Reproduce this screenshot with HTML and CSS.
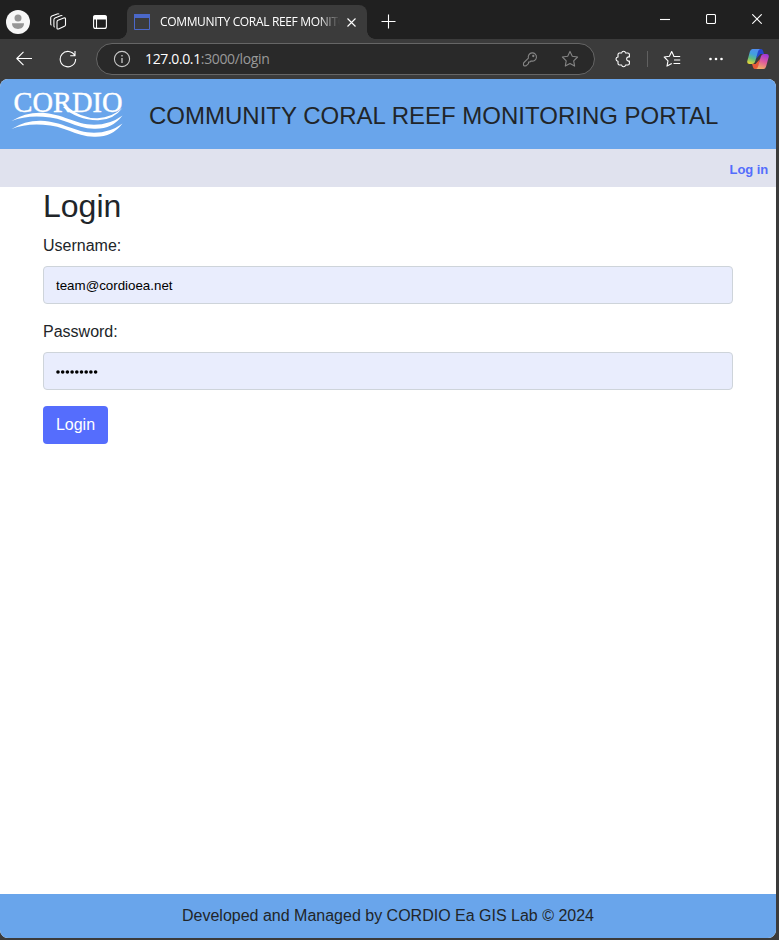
FILE: index.html
```html
<!DOCTYPE html>
<html lang="en">
<head>
<meta charset="utf-8">
<title>Community Coral Reef Monitoring Portal</title>
<link rel="stylesheet" href="styles.css">
</head>
<body>
<div class="window">
  <div class="titlebar">
    <span class="cell cell-avatar"><svg width="24" height="24" viewBox="0 0 24 24"><circle cx="12" cy="12" r="12" fill="#f7f7f7"/><circle cx="12" cy="8" r="3.500" fill="#969696"/><path d="M6 13.300h12c0 3.800-2.600 5.700-6 5.700s-6-1.900-6-5.700z" fill="#969696"/></svg></span>
    <span class="cell cell-spaces"><svg width="18" height="18" viewBox="0 0 18 18" class="line"><path d="M9 7.200 14.800 5Q16.500 4.500 16.500 6V11.700Q16.500 12.900 15.400 13.300L9.600 15.900Q8 16.500 8 14.900V8.700Q8 7.600 9 7.200ZM5.700 14.200Q4.900 13.900 4.900 13V6.700Q4.900 5.500 6 5L11.500 2.700Q12.600 2.300 13.400 2.900M2.500 12.200Q1.700 11.900 1.700 11V4.700Q1.700 3.500 2.800 3L8.200.9Q9.300.500 10.200 1.100"/></svg></span>
    <span class="cell cell-actions"><svg width="14" height="14" viewBox="0 0 14 14" class="line"><rect x=".6" y=".6" width="12.800" height="12.800" rx="2"/><path d="M1 1h12v3H1z" fill="#fff"/><path d="M3.500 4v9"/></svg></span>
    <div class="tab">
      <svg width="16" height="16" viewBox="0 0 16 16"><path d="M.5.500h15v15H.5z" fill="none" stroke="#4b68c9"/><path d="M0 0h16v4H0z" fill="#4b68c9"/></svg>
      <span class="tab-title">COMMUNITY CORAL REEF MONITORING PORTAL</span>
      <svg width="9" height="9" viewBox="0 0 9 9" class="line"><path d="m.5.500 8 8m0-8-8 8"/></svg>
    </div>
    <span class="cell cell-plus"><svg width="15" height="15" viewBox="0 0 15 15" class="line"><path d="M7.500.500v14M.500 7.500h14"/></svg></span>
    <div class="controls">
      <span class="cell control"><svg width="10" height="10" viewBox="0 0 10 10" class="line"><path d="M0 5.500h10"/></svg></span>
      <span class="cell control"><svg width="10" height="10" viewBox="0 0 10 10" class="line"><rect x=".5" y=".5" width="9" height="9" rx="1.200"/></svg></span>
      <span class="cell control"><svg width="10" height="10" viewBox="0 0 10 10" class="line"><path d="m.3.300 9.400 9.400m0-9.400L.3 9.700"/></svg></span>
    </div>
  </div>

  <div class="toolbar">
    <span class="cell cell-back"><svg width="16" height="16" viewBox="0 0 16 16" class="line"><path d="M16 7.500H.8M7.500.800.800 7.500l6.700 6.700"/></svg></span>
    <span class="cell cell-reload"><svg width="18" height="18" viewBox="0 0 18 18" class="line"><path d="M15.700 5.500A7.700 7.700 0 1 0 16.600 9M16 1v4.700h-4.800"/></svg></span>
    <div class="address">
      <svg width="18" height="18" viewBox="0 0 18 18" class="line info"><circle cx="9" cy="9" r="7.600"/><path d="M9 8v5M9 5v1.500" stroke-width="1.300"/></svg>
      <span class="url"><b>127.0.0.1</b>:3000/login</span>
      <svg width="18" height="18" viewBox="0 0 18 18" class="line dim key"><path d="M7.400 8.100a4.100 4.100 0 1 1 2.700 2.800L8.900 12H7.500v1.600l-1.700 1.600Q5.300 15.900 4.500 15.900H3.300Q2.500 15.900 2.500 15v-1.300Q2.500 13 3 12.500Z"/><circle cx="12.300" cy="6" r=".6"/></svg>
      <svg width="18" height="18" viewBox="0 0 18 18" class="line dim"><path d="m9 1.400 2.300 4.900 5.300.7-3.900 3.800.9 5.300L9 13.600l-4.700 2.500.9-5.300L1.400 7l5.300-.7z"/></svg>
    </div>
    <span class="cell cell-puzzle"><svg width="18" height="18" viewBox="0 0 18 18" class="line"><path d="M4.900 3H7.700Q7.900 1.300 9.600 1.300T11.500 3H13.700Q15.400 3 15.400 4.600V6.900H14.500Q12.600 7.100 12.600 9T14.500 11.100H15.400V13.400Q15.400 15 13.700 15H11.500Q11.300 16.700 9.600 16.700T7.700 15H5.600Q4 15 4 13.400V11.300Q2 11.100 2 9.100T4 7V4.600Q4 3 5.600 3"/></svg></span>
    <span class="divider"></span>
    <span class="cell cell-fav"><svg width="18" height="18" viewBox="0 0 18 18" class="line"><path d="M10.800 6.100 8.700 1.500 6.400 6.300 1.200 7l3.800 3.800-1 5.300 4.800-2.500M10.300 6.500h6.900M11 10h6.200M10.500 13.500h6.700"/></svg></span>
    <span class="cell cell-dots"><svg width="16" height="4" viewBox="0 0 16 4" fill="#fff"><circle cx="2.500" cy="2" r="1.300"/><circle cx="8" cy="2" r="1.300"/><circle cx="13.500" cy="2" r="1.300"/></svg></span>
    <span class="cell cell-copilot"><svg width="22" height="20" viewBox="0 0 22 20">
      <defs>
        <linearGradient id="cool" x1=".6" y1="0" x2=".3" y2="1"><stop offset="0" stop-color="#518ff0"/><stop offset=".35" stop-color="#429fe0"/><stop offset=".65" stop-color="#60bd80"/><stop offset="1" stop-color="#e5d735"/></linearGradient>
        <linearGradient id="warm" x1=".7" y1="0" x2=".4" y2="1"><stop offset="0" stop-color="#9c36df"/><stop offset=".5" stop-color="#df5a9d"/><stop offset="1" stop-color="#f2ad65"/></linearGradient>
      </defs>
      <path d="M11 0h3.200q1.300 0 1.800 1.800L17 5h-3.500L9 10z" fill="#2546ce"/>
      <path d="M11 20H7.800Q6.500 20 6 18.200L5 15h3.500L13 10z" fill="#e75a38"/>
      <path d="M5.500 0H13q-1.500.5-2 2.500L8.300 12q-.8 3-3.300 3H2.500Q-.3 15 .3 12L2.900 2.500Q3.700 0 5.500 0Z" fill="url(#cool)"/>
      <path d="M16.500 20H9q1.500-.5 2-2.500L13.700 8q.8-3 3.300-3h2.500q2.800 0 2.200 3l-2.600 9.500q-.8 2.500-2.600 2.500Z" fill="url(#warm)"/>
    </svg></span>
  </div>

  <div class="page">
    <header class="banner">
      <svg class="logo" width="118" height="52" viewBox="0 0 118 52" fill="#fff">
        <text class="logo-word" x="2.500" y="25" textLength="109" lengthAdjust="spacingAndGlyphs">CORDIO</text>
        <path d="M52 20h4.500q14 11.500 30 11.200Q101 30.500 111.500 21 102 33.500 86.500 33.200 66 33 52 20Z"/>
        <path d="M.5 34Q14 25.500 30 25.800c22 .8 34 11.800 53 12q16 0 28.500-9.300-10.500 14-28.500 13.300C64 41 53 30.500 32 29.700Q14 28.500.5 34Z"/>
        <path d="M.5 42Q14 33.500 30 33.800c22 .8 34 11.800 53 12q16 0 28.500-9.300-10.500 14-28.500 13.300C64 49 53 38.500 32 37.700Q14 36.500.5 42Z"/>
      </svg>
      <span class="portal-name">COMMUNITY CORAL REEF MONITORING PORTAL</span>
    </header>
    <nav class="nav"><a class="nav-link">Log in</a></nav>
    <main class="content">
      <h1 class="heading">Login</h1>
      <label class="label" for="username">Username:</label>
      <input class="field" id="username" type="text" value="team@cordioea.net">
      <label class="label" for="password">Password:</label>
      <div class="field masked" id="password"><svg width="42" height="4" viewBox="0 0 42 4"><path class="bullets" d="M2 2h38"/></svg></div>
      <button class="submit">Login</button>
    </main>
    <footer class="footer">Developed and Managed by CORDIO Ea GIS Lab © 2024</footer>
  </div>
</div>
</body>
</html>
```
FILE: styles.css
```css
* { box-sizing: border-box; }
body { margin: 0; background: #3b3b3b; font-family: "Liberation Sans", Arial, sans-serif; color: #212529; }
svg { display: block; flex: none; }
.line { fill: none; stroke: #fff; stroke-width: 1.1; stroke-linejoin: round; stroke-linecap: butt; }
.dim { stroke: #858585; }
.info { stroke: #c8c8c8; }
.window { width: 779px; height: 940px; overflow: hidden; display: flex; flex-direction: column; }
.cell { display: flex; align-items: center; justify-content: center; flex: none; }

.titlebar { height: 39px; flex: none; display: flex; background: #202020; }
.titlebar > .cell { height: 43px; }
.cell-avatar { width: 36px; }
.cell-spaces { width: 44px; }
.cell-actions { width: 40px; margin-right: 7px; }
.tab { position: relative; width: 240px; height: 34px; margin-top: 5px; padding: 0 11px 0 7px; display: flex; align-items: center; background: #3b3b3b; border-radius: 8px 8px 0 0; }
.tab::before, .tab::after { content: ""; position: absolute; bottom: 0; width: 8px; height: 8px; }
.tab::before { left: -8px; background: radial-gradient(circle at 0 0, transparent 7.5px, #3b3b3b 8px); }
.tab::after { right: -8px; background: radial-gradient(circle at 100% 0, transparent 7.5px, #3b3b3b 8px); }
.tab-title { width: 180px; margin: 0 7px 0 10px; overflow: hidden; white-space: nowrap; color: #fff; font: 12px/18px "Open Sans", "Noto Sans", sans-serif; letter-spacing: -0.34px; -webkit-mask-image: linear-gradient(to right, #000 158px, transparent 180px); mask-image: linear-gradient(to right, #000 158px, transparent 180px); }
.cell-plus { width: 43px; }
.controls { display: flex; margin-left: auto; margin-right: -1px; }
.control { width: 46px; height: 38px; }

.toolbar { height: 40px; flex: none; display: flex; align-items: center; background: #3b3b3b; }
.cell-back { width: 48px; }
.cell-reload { width: 40px; }
.address { width: 499px; height: 32px; margin: 0 8px; padding: 0 15px 0 16px; display: flex; align-items: center; background: #292929; border: 1px solid #666; border-radius: 16px; }
.url { margin-left: 14px; color: #999; font: 14px/20px "Open Sans", "Noto Sans", sans-serif; letter-spacing: -0.36px; }
.url b { font-weight: 400; color: #fff; }
.key { margin-left: auto; margin-right: 22px; }
.cell-puzzle { width: 40px; }
.divider { width: 1px; height: 16px; margin: 0 4px; background: #606060; }
.cell-fav { width: 40px; }
.cell-dots { width: 48px; }
.cell-copilot { width: 36px; }

.page { width: 776px; height: 859px; flex: none; display: flex; flex-direction: column; overflow: hidden; background: #fff; border-radius: 8px; }
.banner { height: 70px; display: flex; background: #69a5eb; }
.logo { margin: 8px 0 0 11px; }
.logo-word { font: 29px "Liberation Serif", serif; stroke: #fff; stroke-width: .4px; }
.portal-name { margin-left: 20px; padding-top: 19px; font-size: 24px; line-height: 36px; white-space: nowrap; }
.nav { height: 38px; padding: 3px 8px 0; display: flex; align-items: center; justify-content: flex-end; background: #e0e2ee; }
.nav-link { color: #546dfc; font-size: 13px; font-weight: 700; letter-spacing: -0.1px; }
.content { flex: 1; padding: 0 43px; }
.heading { margin: 0 0 9px; font-size: 32px; font-weight: 400; line-height: 38px; }
.label { display: block; height: 24px; margin-bottom: 8px; font-size: 16px; line-height: 24px; }
.field { display: block; width: 100%; height: 38px; margin: 0 0 16px; padding: 0 12px; border: 1px solid #ced4da; border-radius: 4px; background: #e9edfd; color: #000; font: 13.333px "Liberation Sans", Arial, sans-serif; }
.masked { display: flex; align-items: center; padding-top: 1px; }
.bullets { fill: none; stroke: #000; stroke-width: 3.6; stroke-linecap: round; stroke-dasharray: 0 4.7; }
.submit { width: 65px; height: 38px; padding: 0; border: 0; border-radius: 4px; background: #556dfd; color: #fff; font: 16px/24px "Liberation Sans", Arial, sans-serif; }
.footer { height: 44px; background: #69a5eb; font-size: 16px; line-height: 44px; text-align: center; }
```
